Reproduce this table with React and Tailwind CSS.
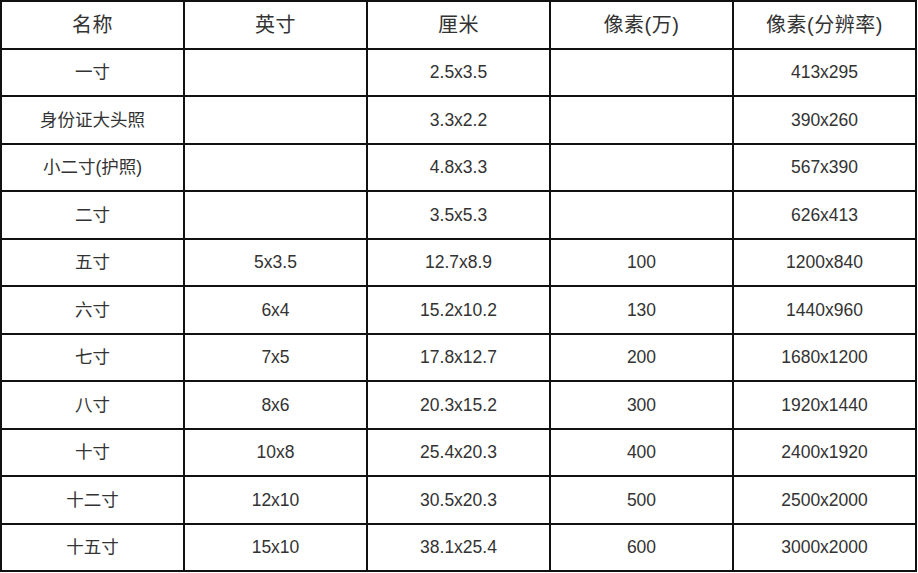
const header = ["名称", "英寸", "厘米", "像素(万)", "像素(分辨率)"];

const rows = [
  ["一寸", "", "2.5x3.5", "", "413x295"],
  ["身份证大头照", "", "3.3x2.2", "", "390x260"],
  ["小二寸(护照)", "", "4.8x3.3", "", "567x390"],
  ["二寸", "", "3.5x5.3", "", "626x413"],
  ["五寸", "5x3.5", "12.7x8.9", "100", "1200x840"],
  ["六寸", "6x4", "15.2x10.2", "130", "1440x960"],
  ["七寸", "7x5", "17.8x12.7", "200", "1680x1200"],
  ["八寸", "8x6", "20.3x15.2", "300", "1920x1440"],
  ["十寸", "10x8", "25.4x20.3", "400", "2400x1920"],
  ["十二寸", "12x10", "30.5x20.3", "500", "2500x2000"],
  ["十五寸", "15x10", "38.1x25.4", "600", "3000x2000"],
];

export default function App() {
  return (
    <div className="w-[918px] h-[573px] bg-white overflow-hidden">
      <div
        className="grid grid-cols-5 grid-rows-12 w-[917px] h-[572px] border-t-2 border-l-2 border-[#111] text-[#333]"
        style={{ fontFamily: '"Liberation Sans", "Noto Sans CJK SC", sans-serif' }}
      >
        {header.map((h, i) => (
          <div
            key={i}
            className="flex items-center justify-center border-r-2 border-b-2 border-[#111] text-[20px] tracking-[0.5px] pt-[1px]"
          >
            {h}
          </div>
        ))}
        {rows.map((r, ri) =>
          r.map((c, ci) => (
            <div
              key={ri + "-" + ci}
              className="flex items-center justify-center border-r-2 border-b-2 border-[#111] text-[17.5px]"
            >
              {c}
            </div>
          ))
        )}
      </div>
    </div>
  );
}
